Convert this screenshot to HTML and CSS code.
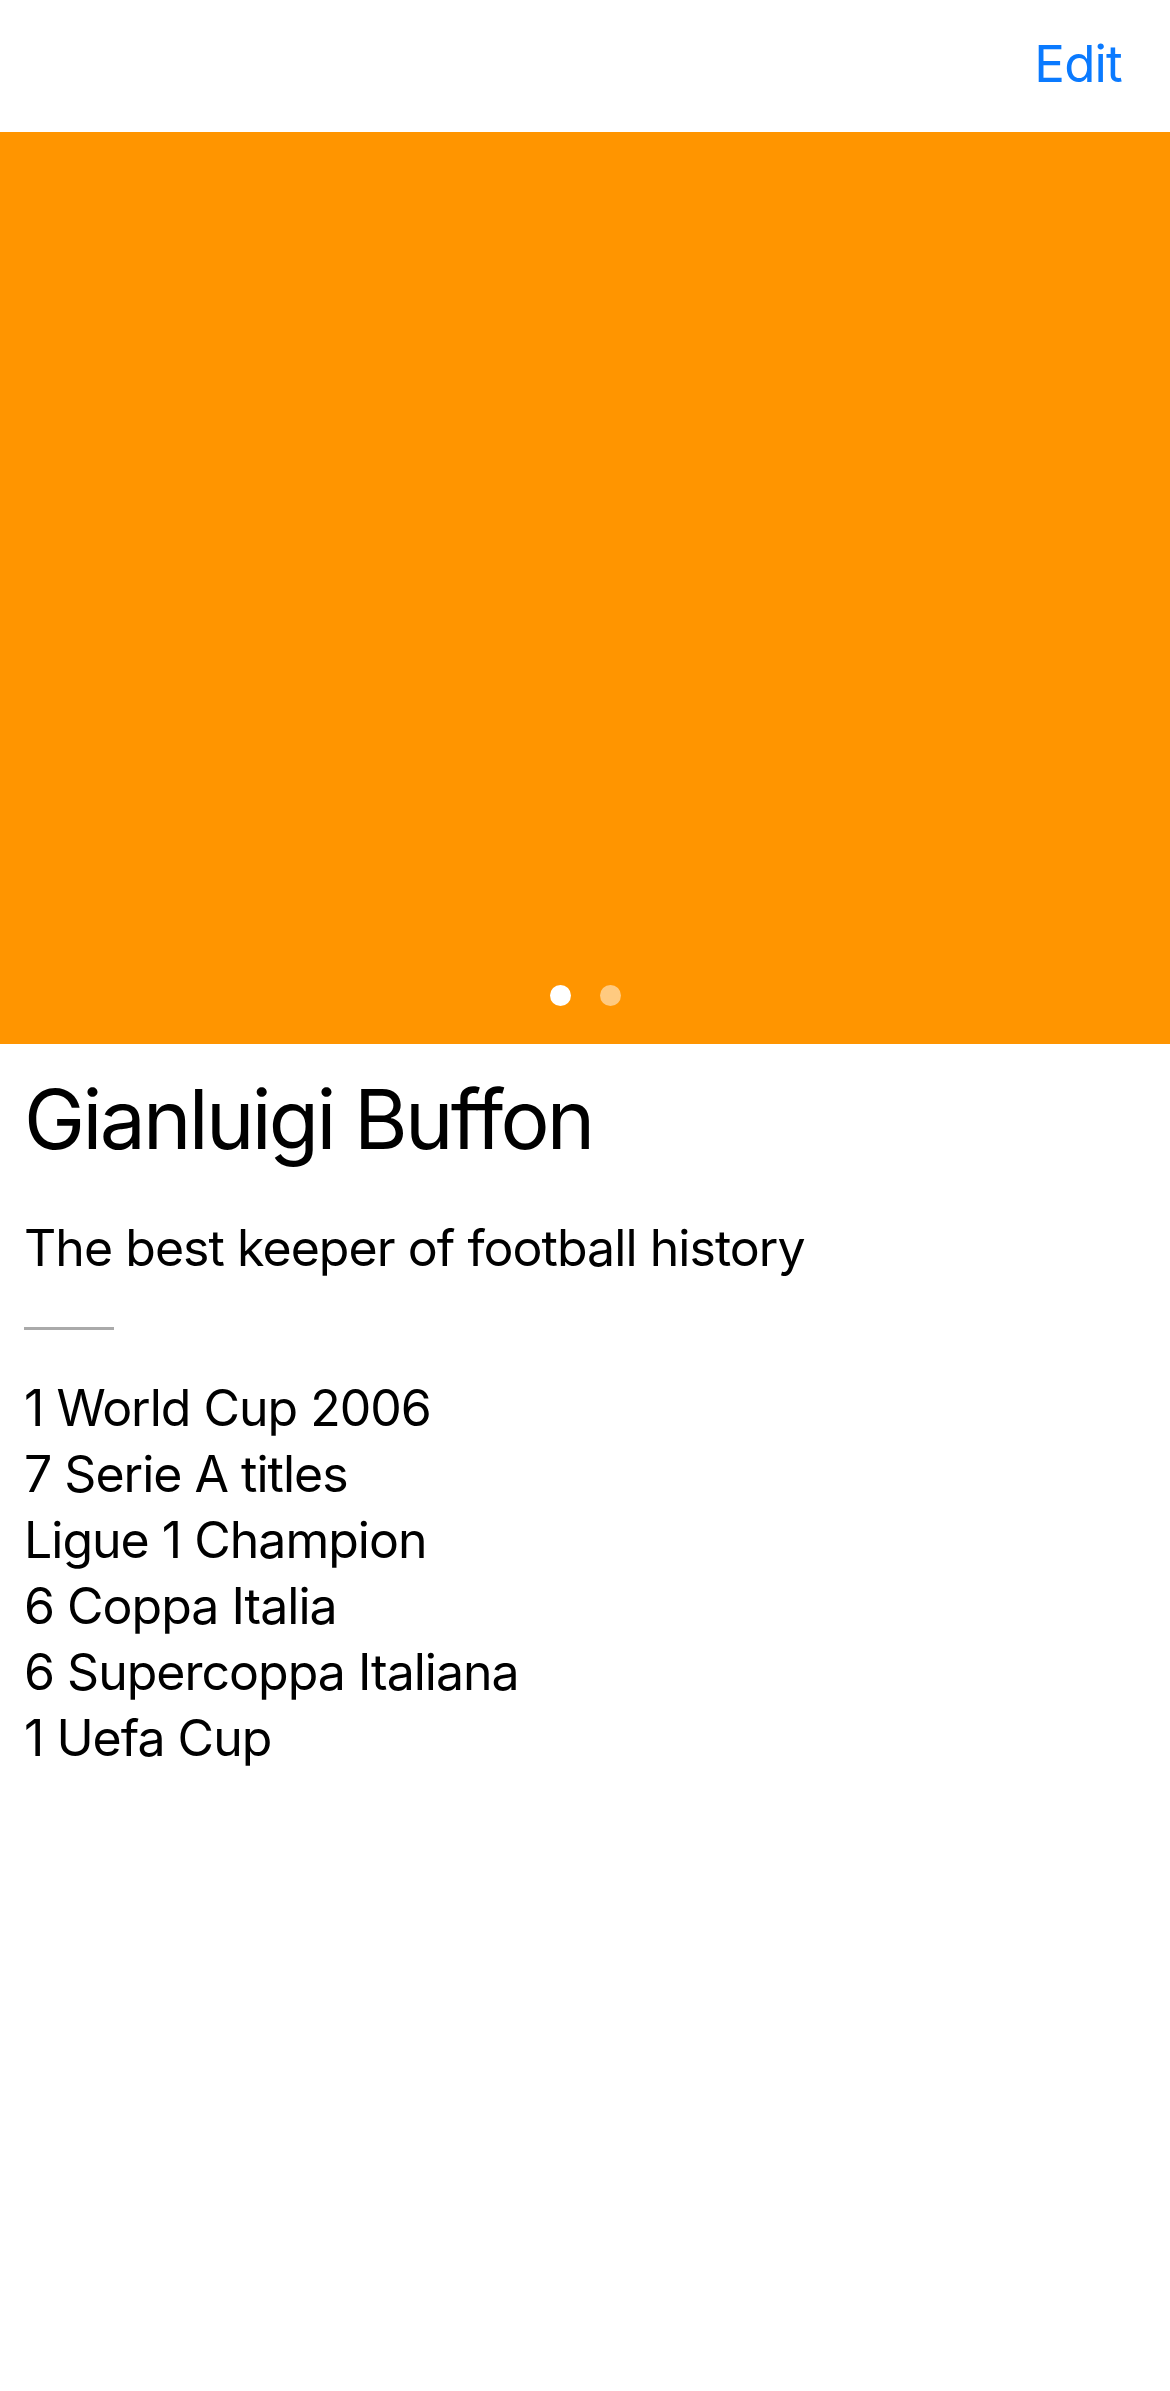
FILE: index.html
```html
<!DOCTYPE html>
<html lang="en">
<head>
<meta charset="utf-8">
<title>Gianluigi Buffon</title>
<link rel="stylesheet" href="styles.css">
</head>
<body>
  <header class="navbar">
    <span class="edit">Edit</span>
  </header>
  <section class="carousel">
    <div class="dots">
      <span class="dot active"></span>
      <span class="dot"></span>
    </div>
  </section>
  <main class="content">
    <h1 class="title">Gianluigi Buffon</h1>
    <p class="subtitle">The best keeper of football history</p>
    <hr class="divider">
    <ul class="titles">
      <li>1 World Cup 2006</li>
      <li>7 Serie A titles</li>
      <li>Ligue 1 Champion</li>
      <li>6 Coppa Italia</li>
      <li>6 Supercoppa Italiana</li>
      <li>1 Uefa Cup</li>
    </ul>
  </main>
</body>
</html>
```
FILE: styles.css
```css
html, body {
  margin: 0;
  padding: 0;
  background: #ffffff;
}
body {
  font-family: Inter, "Noto Sans", "Liberation Sans", sans-serif;
  color: #000000;
  width: 1170px;
  min-height: 2391px;
}
.navbar {
  height: 132px;
  box-sizing: border-box;
  display: flex;
  justify-content: flex-end;
  align-items: flex-start;
  padding: 31px 48px 0 0;
}
.edit {
  font-size: 51px;
  line-height: 66px;
  color: #0a7aff;
  letter-spacing: -0.8px;
}
.carousel {
  position: relative;
  height: 912px;
  background: #ff9500;
}
.dots {
  position: absolute;
  left: 0;
  right: 0;
  bottom: 38px;
  display: flex;
  justify-content: center;
  gap: 29px;
}
.dot {
  width: 21px;
  height: 21px;
  border-radius: 50%;
  background: rgba(255, 255, 255, 0.5);
}
.dot.active {
  background: #ffffff;
}
.content {
  padding: 26px 24px 0 24px;
}
.title {
  margin: 0;
  font-size: 82px;
  font-weight: 400;
  line-height: 100px;
  letter-spacing: -2.7px;
}
.subtitle {
  margin: 45px 0 0 0;
  font-size: 50px;
  line-height: 66px;
  letter-spacing: -0.95px;
}
.divider {
  margin: 46px 0 0 0;
  width: 90px;
  height: 3px;
  border: 0;
  background: #aaaaaa;
}
.titles {
  list-style: none;
  margin: 45px 0 0 0;
  padding: 0;
  font-size: 50px;
  line-height: 66px;
  letter-spacing: -1px;
}
```
